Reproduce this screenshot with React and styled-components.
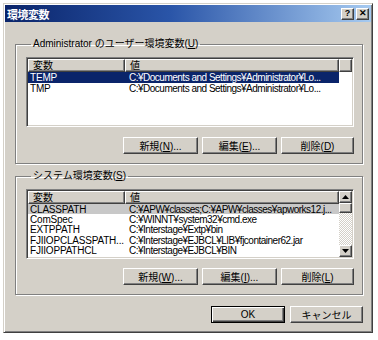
import React from "react";
import styled, { createGlobalStyle, css } from "styled-components";

const FONT = `"Liberation Sans", "Noto Sans CJK JP", sans-serif`;
const FACE = "#d4d0c8";

const Global = createGlobalStyle`
  html, body { margin: 0; padding: 0; background: #ffffff; }
  body { font-family: ${FONT}; font-size: 10px; color: #000; }
  * { box-sizing: border-box; }
`;

const Dialog = styled.div`
  margin: 3px 0 0 3px;
  width: 370px;
  height: 330px;
  background: ${FACE};
  border: 1px solid;
  border-color: ${FACE} #404040 #404040 ${FACE};
  box-shadow: inset 1px 1px 0 #ffffff, inset -1px -1px 0 #808080;
  padding: 1px;
  display: flex;
  flex-direction: column;
`;

const TitleBar = styled.div`
  height: 17px;
  display: flex;
  align-items: center;
  justify-content: space-between;
  padding: 0 2px 0 2px;
  background: linear-gradient(to right, #0a246a 0%, #2a55a8 45%, #a6caf0 100%);
`;

const Title = styled.span`
  color: #ffffff;
  font-weight: bold;
  font-size: 11px;
  letter-spacing: -0.5px;
`;

const CaptionButtons = styled.div`
  display: flex;
  gap: 2px;
`;

const raised = css`
  background: ${FACE};
  border: 1px solid;
  border-color: #ffffff #404040 #404040 #ffffff;
  box-shadow: inset -1px -1px 0 #808080;
`;

const CaptionButton = styled.div`
  ${raised}
  width: 13px;
  height: 12px;
  display: flex;
  align-items: center;
  justify-content: center;
  font-weight: bold;
  font-size: 9px;
  line-height: 1;
`;

const Body = styled.div`
  flex: 1;
  display: flex;
  flex-direction: column;
  padding: 16px 8px 0 10px;
`;

const Group = styled.fieldset`
  margin: ${(p) => (p.$first ? "0" : "6px")} 0 0 0;
  padding: 7px 8px 9px 10px;
  border: 1px solid #808080;
  box-shadow: inset 1px 1px 0 #ffffff, 1px 1px 0 #ffffff;
  display: flex;
  flex-direction: column;
  min-width: 0;
`;

const Legend = styled.legend`
  padding: 0 2px;
  margin-left: 5px;
  font-size: 10px;
  line-height: 12px;
`;

const ListView = styled.div`
  height: ${(p) => p.$height}px;
  background: #ffffff;
  border: 1px solid;
  border-color: #808080 #ffffff #ffffff #808080;
  box-shadow: inset 1px 1px 0 #404040, inset -1px -1px 0 ${FACE};
  padding: 1px;
  display: flex;
  overflow: hidden;
`;

const ListMain = styled.div`
  flex: 1;
  min-width: 0;
  display: flex;
  flex-direction: column;
`;

const HeaderRow = styled.div`
  display: flex;
  height: 13px;
  flex-shrink: 0;
`;

const HeaderCell = styled.div`
  ${raised}
  width: ${(p) => (p.$w ? `${p.$w}px` : "auto")};
  flex: ${(p) => (p.$w ? "0 0 auto" : "1")};
  padding-left: 4px;
  font-size: 10px;
  line-height: 11px;
  white-space: nowrap;
  overflow: hidden;
`;

const Row = styled.div`
  display: flex;
  height: ${(p) => p.$h}px;
  align-items: center;
  width: 311px;
  background: ${(p) =>
    p.$sel === "focus" ? "#0a246a" : p.$sel === "blur" ? "#c8c8c8" : "transparent"};
  color: ${(p) => (p.$sel === "focus" ? "#ffffff" : "#000000")};
  font-size: 10px;
  white-space: nowrap;
`;

const Cell = styled.div`
  width: ${(p) => p.$w}px;
  flex: 0 0 auto;
  padding-left: ${(p) => p.$pl}px;
  letter-spacing: ${(p) => p.$ls || 0}px;
  white-space: nowrap;
`;

const ScrollBar = styled.div`
  width: 13px;
  flex: 0 0 13px;
  display: flex;
  flex-direction: column;
  background-color: #ffffff;
  background-image: linear-gradient(45deg, ${FACE} 25%, transparent 25%, transparent 75%, ${FACE} 75%),
    linear-gradient(45deg, ${FACE} 25%, transparent 25%, transparent 75%, ${FACE} 75%);
  background-size: 2px 2px;
  background-position: 0 0, 1px 1px;
`;

const ScrollPart = styled.div`
  ${raised}
  height: ${(p) => p.$h}px;
  flex-shrink: 0;
  display: flex;
  align-items: center;
  justify-content: center;
  margin-bottom: ${(p) => (p.$gap ? "auto" : "0")};
`;

const ButtonRow = styled.div`
  display: flex;
  justify-content: flex-end;
  gap: ${(p) => p.$gap || 4}px;
  margin-top: ${(p) => p.$mt || 10}px;
`;

const Button = styled.button`
  ${raised}
  font-family: ${FONT};
  font-size: 10px;
  width: ${(p) => p.$w || 75}px;
  height: 17px;
  padding: 0;
  color: #000;
  ${(p) =>
    p.$default &&
    css`
      border-color: #000000;
      box-shadow: inset 1px 1px 0 #ffffff, inset -1px -1px 0 #404040, inset -2px -2px 0 #808080;
    `}
`;

const Footer = styled.div`
  display: flex;
  justify-content: flex-end;
  gap: 5px;
  margin-top: 11px;
  padding-right: 0;
`;

const Arrow = ({ up }) => (
  <svg width="7" height="4" viewBox="0 0 7 4">
    <path d={up ? "M3.5 0 L7 4 L0 4 Z" : "M0 0 L7 0 L3.5 4 Z"} fill="#000" />
  </svg>
);

const userVars = [
  ["TEMP", "C:¥Documents and Settings¥Administrator¥Lo...", "focus"],
  ["TMP", "C:¥Documents and Settings¥Administrator¥Lo...", null],
];

const sysVars = [
  ["CLASSPATH", "C:¥APW¥classes;C:¥APW¥classes¥apworks12.j...", "blur"],
  ["ComSpec", "C:¥WINNT¥system32¥cmd.exe", null],
  ["EXTPPATH", "C:¥Interstage¥Extp¥bin", null],
  ["FJIIOPCLASSPATH...", "C:¥Interstage¥EJBCL¥LIB¥fjcontainer62.jar", null],
  ["FJIIOPPATHCL", "C:¥Interstage¥EJBCL¥BIN", null],
];

const Header = ({ filler }) => (
  <HeaderRow>
    <HeaderCell $w={97}>変数</HeaderCell>
    <HeaderCell $w={214}>値</HeaderCell>
    {filler && <HeaderCell />}
  </HeaderRow>
);

const Rows = ({ data, h }) =>
  data.map(([name, value, sel]) => (
    <Row key={name} $h={h} $sel={sel}>
      <Cell $w={97} $pl={2} $ls={-0.2}>{name}</Cell>
      <Cell $w={214} $pl={4} $ls={-0.5}>{value}</Cell>
    </Row>
  ));

export default function App() {
  return (
    <>
      <Global />
      <Dialog>
        <TitleBar>
          <Title>環境変数</Title>
          <CaptionButtons>
            <CaptionButton>?</CaptionButton>
            <CaptionButton>✕</CaptionButton>
          </CaptionButtons>
        </TitleBar>
        <Body>
          <Group $first>
            <Legend>
              Administrator のユーザー環境変数(<u>U</u>)
            </Legend>
            <ListView $height={70}>
              <ListMain>
                <Header filler />
                <Rows data={userVars} h={11} />
              </ListMain>
            </ListView>
            <ButtonRow>
              <Button>新規(<u>N</u>)...</Button>
              <Button>編集(<u>E</u>)...</Button>
              <Button $w={73}>削除(<u>D</u>)</Button>
            </ButtonRow>
          </Group>
          <Group>
            <Legend>
              システム環境変数(<u>S</u>)
            </Legend>
            <ListView $height={70}>
              <ListMain>
                <Header />
                <Rows data={sysVars} h={10.4} />
              </ListMain>
              <ScrollBar>
                <ScrollPart $h={12}>
                  <Arrow up />
                </ScrollPart>
                <ScrollPart $h={10} $gap />
                <ScrollPart $h={12}>
                  <Arrow />
                </ScrollPart>
              </ScrollBar>
            </ListView>
            <ButtonRow $mt={9}>
              <Button>新規(<u>W</u>)...</Button>
              <Button>編集(<u>I</u>)...</Button>
              <Button $w={73}>削除(<u>L</u>)</Button>
            </ButtonRow>
          </Group>
          <Footer>
            <Button $w={74} $default>OK</Button>
            <Button $w={73}>キャンセル</Button>
          </Footer>
        </Body>
      </Dialog>
    </>
  );
}
